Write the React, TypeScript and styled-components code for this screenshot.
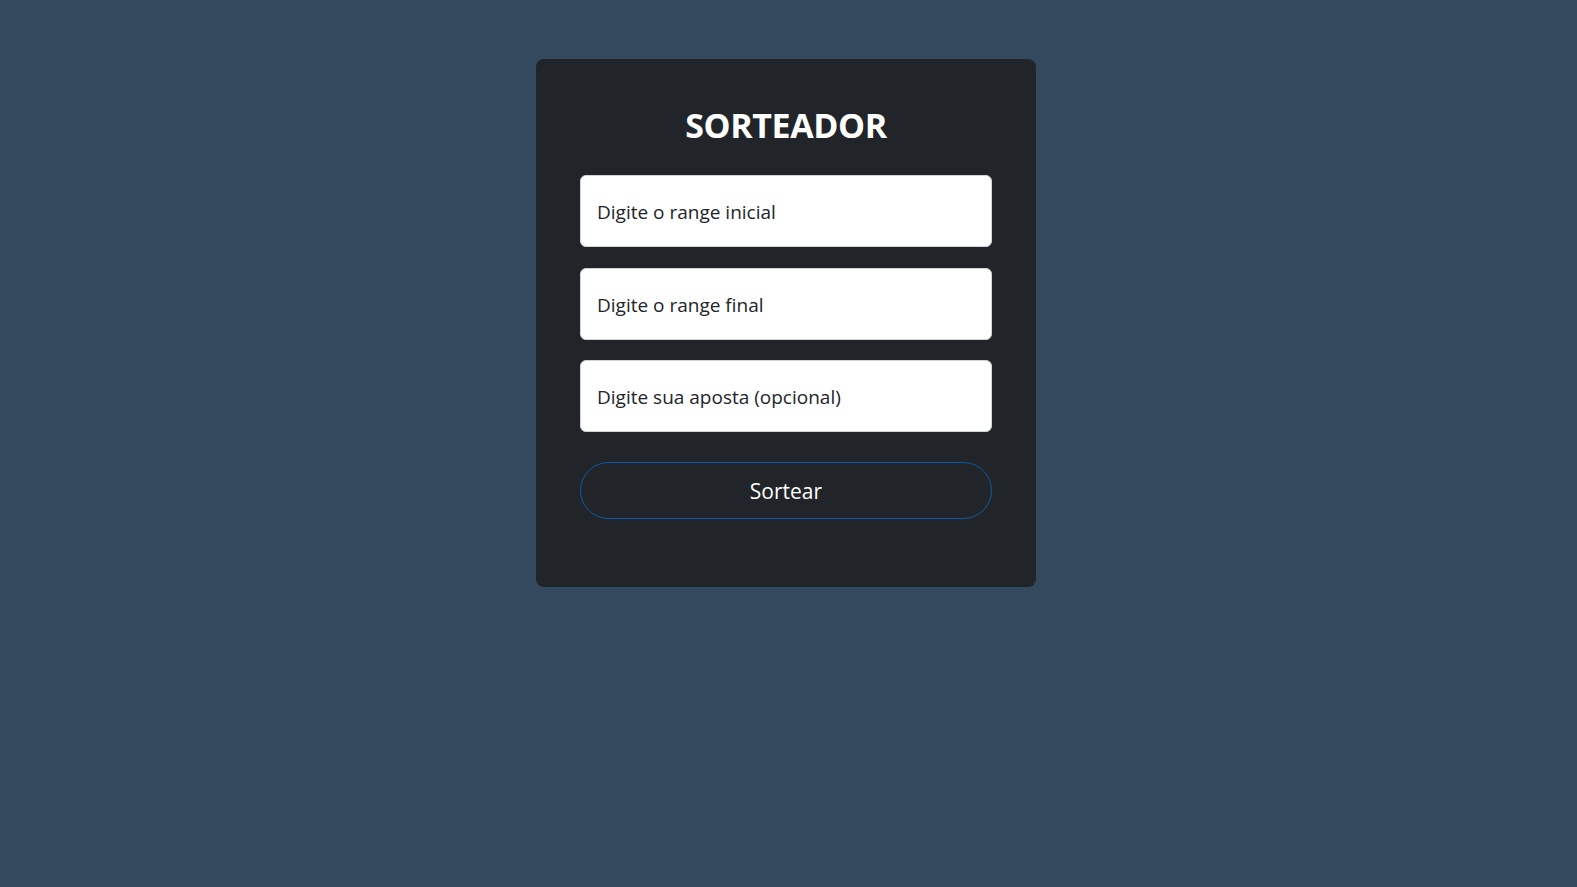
import styled, { createGlobalStyle } from 'styled-components';

const GlobalStyle = createGlobalStyle`
  html, body {
    margin: 0;
    padding: 0;
    background: #34495e;
    font-family: "Open Sans", "Noto Sans", "Liberation Sans", sans-serif;
  }
`;

const Page = styled.div`
  min-height: 100vh;
  display: flex;
  justify-content: center;
  align-items: flex-start;
  padding: 59px 5px 0 0;
  box-sizing: border-box;
`;

const Card = styled.div`
  width: 500px;
  box-sizing: border-box;
  background: #212529;
  border-radius: 8px;
  padding: 45px 44px 68px;
  display: flex;
  flex-direction: column;
`;

const Title = styled.h1`
  margin: 0 0 29px;
  height: 42px;
  line-height: 42px;
  text-align: center;
  color: #ffffff;
  font-size: 34px;
  font-weight: 700;
  letter-spacing: -0.4px;
`;

const Fields = styled.div`
  display: flex;
  flex-direction: column;
  gap: 20.5px;
`;

const Field = styled.input`
  height: 72px;
  box-sizing: border-box;
  border: 1px solid #ced4da;
  border-radius: 6px;
  background: #ffffff;
  padding: 2px 16px 0;
  font-family: inherit;
  font-size: 19px;
  color: #212529;
  outline: none;

  &::placeholder {
    color: #212529;
    opacity: 1;
  }
`;

const DrawButton = styled.button`
  margin-top: 30px;
  height: 57px;
  border: 1px solid #0b58a8;
  border-radius: 999px;
  background: transparent;
  color: #ffffff;
  font-family: inherit;
  font-size: 21px;
  cursor: pointer;
`;

export default function App() {
  return (
    <>
      <GlobalStyle />
      <Page>
        <Card>
          <Title>SORTEADOR</Title>
          <Fields>
            <Field type="number" placeholder="Digite o range inicial" />
            <Field type="number" placeholder="Digite o range final" />
            <Field type="number" placeholder="Digite sua aposta (opcional)" />
          </Fields>
          <DrawButton>Sortear</DrawButton>
        </Card>
      </Page>
    </>
  );
}
